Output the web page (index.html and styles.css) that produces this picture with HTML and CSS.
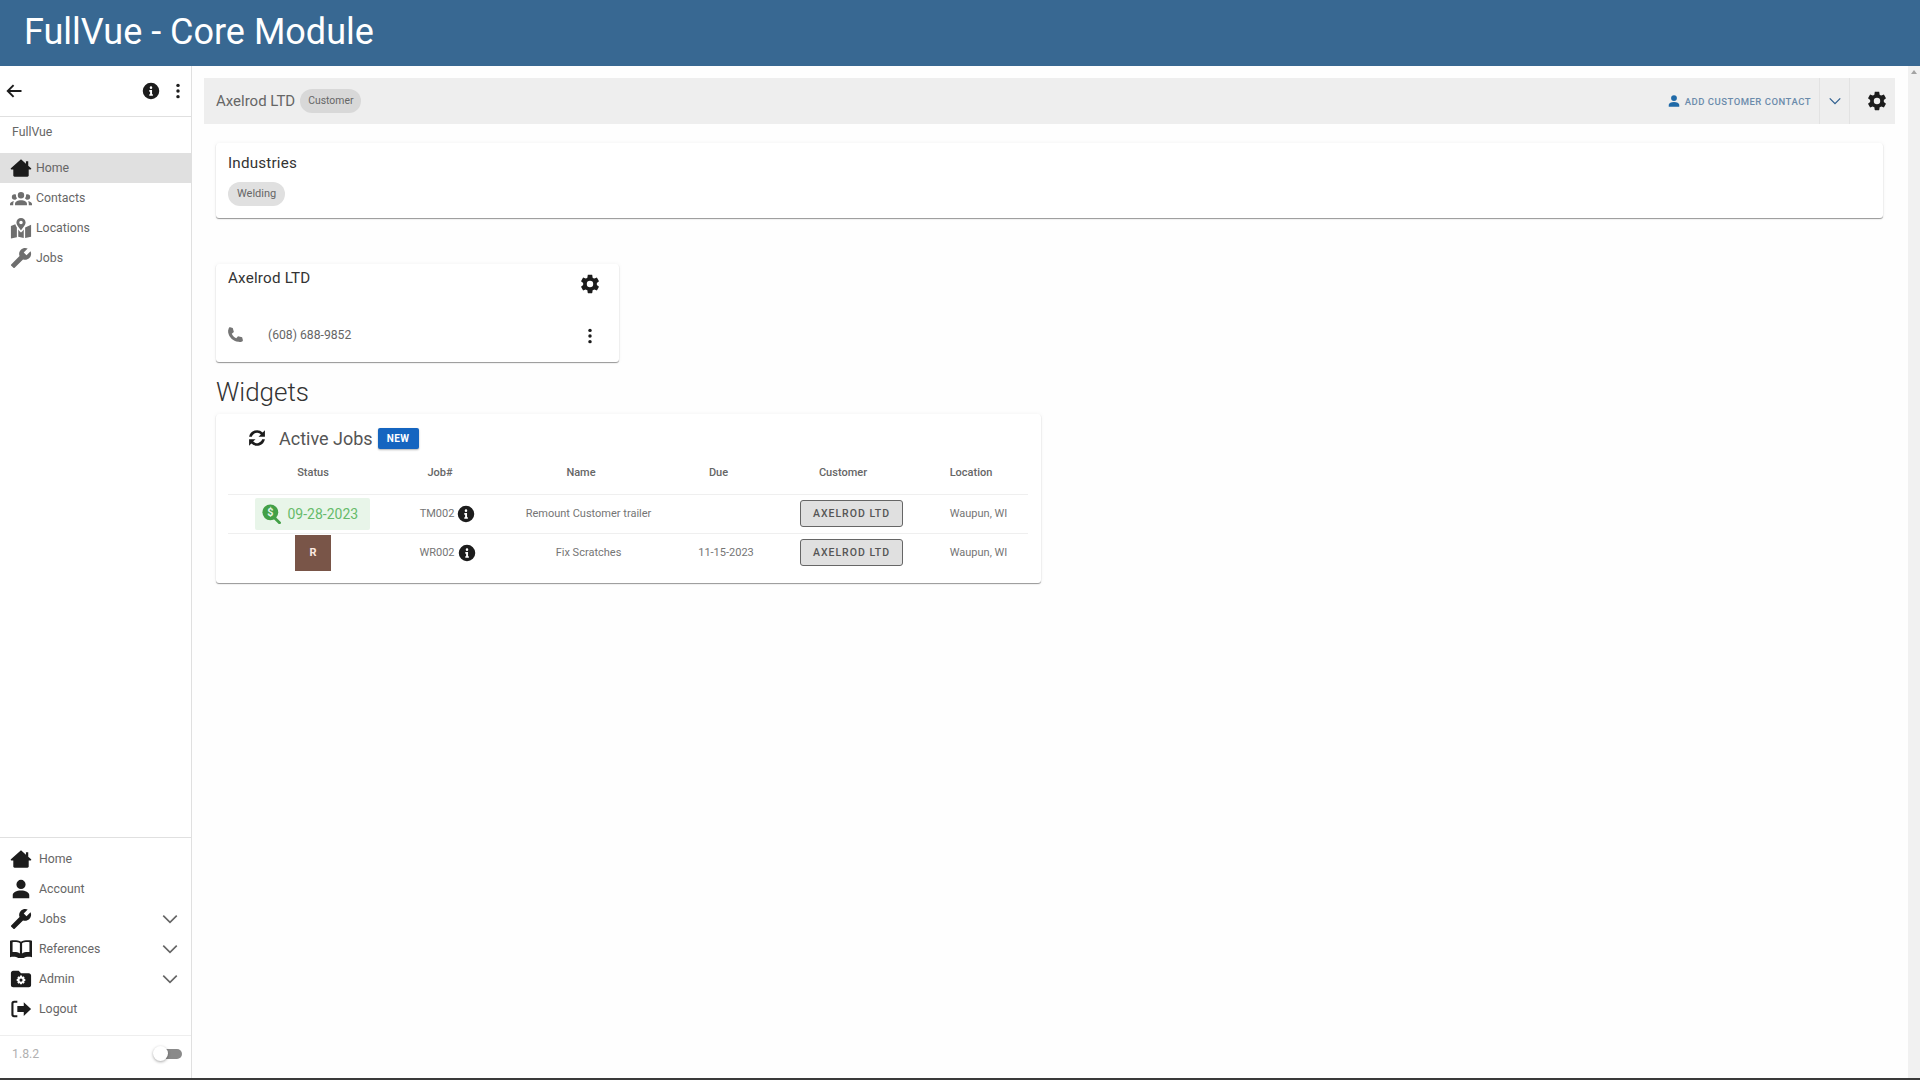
FILE: index.html
```html
<!DOCTYPE html>
<html lang="en">
<head>
    <meta charset="UTF-8">
    <title>FullVue - Core Module</title>
    <link rel="stylesheet" href="styles.css">
</head>
<body>
    <svg class="icon-defs" width="0" height="0">
        <symbol id="i-home" viewBox="0 0 24 24"><path d="M12 2.500 1 12.200c-.5.500-.2 1.300.5 1.300H3.600v6.700c0 .8.600 1.300 1.300 1.300h14.200c.7 0 1.300-.5 1.300-1.300v-6.700h2.100c.7 0 1-.8.5-1.300l-3.100-2.700V4.500h-2.500v2.900z"/></symbol>
        <symbol id="i-group" viewBox="0 0 24 24"><path d="M12,5.500A3.500,3.500 0 0,1 15.500,9A3.500,3.500 0 0,1 12,12.500A3.500,3.500 0 0,1 8.500,9A3.500,3.500 0 0,1 12,5.500M5,8C5.560,8 6.080,8.150 6.530,8.420C6.380,9.850 6.800,11.270 7.660,12.380C7.160,13.340 6.160,14 5,14A3,3 0 0,1 2,11A3,3 0 0,1 5,8M19,8A3,3 0 0,1 22,11A3,3 0 0,1 19,14C17.840,14 16.840,13.340 16.340,12.380C17.200,11.270 17.620,9.850 17.470,8.420C17.920,8.150 18.440,8 19,8M5.500,18.250C5.500,16.180 8.410,14.500 12,14.500C15.590,14.500 18.500,16.180 18.500,18.250V20H5.500V18.250M0,20V18.500C0,17.110 1.890,15.940 4.450,15.600C3.860,16.280 3.500,17.220 3.500,18.250V20H0M24,20H20.500V18.250C20.500,17.220 20.140,16.280 19.550,15.600C22.110,15.940 24,17.110 24,18.500V20Z"/></symbol>
        <symbol id="i-map" viewBox="0 0 24 24"><path fill-rule="evenodd" d="M12 1a5 5 0 0 0-5 5c0 2.500 3.300 6.500 5 8.500 1.700-2 5-6 5-8.500a5 5 0 0 0-5-5zm0 3.200a1.900 1.900 0 1 1 0 3.800 1.900 1.900 0 0 1 0-3.800z"/><path d="M1 9.800 5.800 8c.4 1.300 1 2.400 1.700 3.500V22L1 23.500zM9 13.500c.9 1.200 2 2.500 3 3.500 1-1 2.100-2.300 3-3.500V23l-6-1.500zM16.500 11.500l6.500-3v13L16.500 23z"/></symbol>
        <symbol id="i-wrench" viewBox="0 0 24 24"><path d="M1.300 19 10.400 9.900C9.500 7.600 10 4.900 11.900 3 13.900 1 16.900.6 19.300 1.700L15 6l3 3 4.400-4.300c1.200 2.400.7 5.400-1.300 7.400-1.900 1.900-4.600 2.400-6.900 1.500L5.100 22.700c-.4.400-1 .4-1.400 0L1.400 20.400c-.5-.4-.5-1.100-.1-1.400z"/></symbol>
        <symbol id="i-info" viewBox="0 0 24 24"><path fill-rule="evenodd" d="M12 1a11 11 0 1 0 0 22 11 11 0 0 0 0-22zm0 4.800a1.700 1.700 0 1 1 0 3.400 1.700 1.700 0 0 1 0-3.400zM9.700 10.800h3.700v5.500h1.100v2.100H9.700v-2.100h1.100v-3.400H9.700z"/></symbol>
        <symbol id="i-dots" viewBox="0 0 24 24"><circle cx="12" cy="4.500" r="2.300"/><circle cx="12" cy="12" r="2.300"/><circle cx="12" cy="19.500" r="2.300"/></symbol>
        <symbol id="i-cog" viewBox="0 0 24 24"><path fill-rule="evenodd" d="M12,15.500A3.500,3.500 0 0,1 8.500,12A3.500,3.500 0 0,1 12,8.500A3.500,3.500 0 0,1 15.500,12A3.500,3.500 0 0,1 12,15.500M19.430,12.970C19.470,12.650 19.500,12.330 19.500,12C19.500,11.670 19.470,11.340 19.430,11L21.540,9.370C21.730,9.220 21.780,8.950 21.660,8.730L19.660,5.270C19.540,5.050 19.270,4.960 19.050,5.050L16.560,6.050C16.040,5.660 15.500,5.320 14.870,5.070L14.500,2.420C14.460,2.180 14.250,2 14,2H10C9.750,2 9.540,2.180 9.500,2.420L9.130,5.070C8.500,5.320 7.960,5.660 7.440,6.050L4.950,5.050C4.730,4.960 4.460,5.050 4.340,5.270L2.340,8.730C2.210,8.950 2.270,9.220 2.460,9.370L4.570,11C4.530,11.340 4.500,11.670 4.500,12C4.500,12.330 4.530,12.650 4.570,12.970L2.460,14.630C2.270,14.780 2.210,15.050 2.340,15.270L4.340,18.730C4.460,18.950 4.730,19.030 4.950,18.950L7.440,17.940C7.960,18.340 8.500,18.680 9.130,18.930L9.500,21.580C9.540,21.820 9.750,22 10,22H14C14.250,22 14.460,21.820 14.500,21.580L14.870,18.930C15.500,18.670 16.040,18.340 16.560,17.940L19.050,18.950C19.270,19.030 19.540,18.950 19.660,18.730L21.660,15.270C21.780,15.050 21.730,14.780 21.540,14.630L19.430,12.970Z"/></symbol>
        <symbol id="i-phone" viewBox="0 0 24 24"><path d="M5.500 1.500 9 2.500l1.500 5.500-2.800 2.300c1.300 2.700 3.300 4.800 6 6l2.300-2.800 5.500 1.500 1 3.500c.2.800-.2 1.600-1 2-1.500.7-3.300.9-5 .6C9 19.800 4.200 15 2.900 8.500c-.3-1.700-.1-3.500.6-5 .4-.8 1.200-2.200 2-2z"/></symbol>
        <symbol id="i-user" viewBox="0 0 24 24"><path d="M12,2A5,5 0 0,1 17,7A5,5 0 0,1 12,12A5,5 0 0,1 7,7A5,5 0 0,1 12,2M12,13.500C16.900,13.500 21,15.600 21,18.500V22H3V18.500C3,15.600 7.100,13.500 12,13.500Z"/></symbol>
        <symbol id="i-sync" viewBox="0 0 24 24"><path d="M2.500 10.500A9.700 9.700 0 0 1 18.800 5.400L21.500 2.800V10.500H13.800L16.600 7.700A6.500 6.500 0 0 0 5.800 10.500zM21.500 13.500A9.700 9.700 0 0 1 5.200 18.600L2.500 21.200V13.500H10.200L7.400 16.300A6.500 6.500 0 0 0 18.200 13.500z"/></symbol>
        <symbol id="i-book" viewBox="0 0 24 24"><path fill-rule="evenodd" d="M0 3C4 2 9 2.500 12 4 15 2.500 20 2 24 3V21c-3.500-.8-7-.5-9 .9H9C7 20.500 3.500 20.200 0 21zM2.800 4.600V15.300c3-.4 6 .1 8 1.500V5.600C8.800 4.500 5.500 4.200 2.800 4.600zM21.200 4.600C18.500 4.200 15.200 4.500 13.200 5.600V16.800c2-1.400 5-1.900 8-1.500z"/></symbol>
        <symbol id="i-admin" viewBox="0 0 24 24"><path fill-rule="evenodd" d="M3.500 3h6l2.500 2.800h8.500c1.400 0 2.500 1.100 2.500 2.500v10.200c0 1.400-1.100 2.500-2.500 2.500h-17C2.100 21 1 19.900 1 18.500v-13C1 4.100 2.100 3 3.500 3zM12 11.500a1.700 1.700 0 1 1 0 3.400 1.700 1.700 0 0 1 0-3.400zm-1-3.200h2l.3 1.400 1.300-.6 1.400 1.400-.7 1.300 1.400.3v2l-1.400.3.700 1.300-1.400 1.400-1.300-.7-.3 1.400h-2l-.3-1.400-1.300.7-1.400-1.400.7-1.300-1.400-.3v-2l1.400-.3-.7-1.300 1.400-1.400 1.300.6z"/></symbol>
        <symbol id="i-logout" viewBox="0 0 24 24"><path d="M8 3H4.500A3 3 0 0 0 1.500 6v12a3 3 0 0 0 3 3H8v-2.200H4.800a1 1 0 0 1-1-1V6.200a1 1 0 0 1 1-1H8z"/><path d="M15 4.500 23 12l-8 7.500v-4.300H8V8.800h7z"/></symbol>
        <symbol id="i-chevron" viewBox="0 0 24 24"><path d="M3 7.500 12 16.500 21 7.500" fill="none" stroke="currentColor" stroke-width="2.200"/></symbol>
    </svg>

    <header class="app-bar">FullVue - Core Module</header>

    <div class="app-body">
        <nav class="sidebar">
            <div class="sidebar-top">
                <svg class="back-arrow" viewBox="0 0 24 24"><path d="M21 12H5M11.500 5 4.500 12l7 7" fill="none" stroke="currentColor" stroke-width="2.300"/></svg>
                <span class="spacer"></span>
                <svg class="ico-18"><use href="#i-info"/></svg>
                <svg class="ico-18 dots"><use href="#i-dots"/></svg>
            </div>
            <div class="sidebar-label">FullVue</div>
            <a class="nav-item active"><svg class="nav-icon dark"><use href="#i-home"/></svg>Home</a>
            <a class="nav-item"><svg class="nav-icon"><use href="#i-group"/></svg>Contacts</a>
            <a class="nav-item"><svg class="nav-icon"><use href="#i-map"/></svg>Locations</a>
            <a class="nav-item"><svg class="nav-icon"><use href="#i-wrench"/></svg>Jobs</a>

            <div class="sidebar-bottom">
                <a class="nav-item lower"><svg class="nav-icon dark"><use href="#i-home"/></svg>Home</a>
                <a class="nav-item lower"><svg class="nav-icon dark"><use href="#i-user"/></svg>Account</a>
                <a class="nav-item lower"><svg class="nav-icon dark"><use href="#i-wrench"/></svg>Jobs<svg class="nav-chevron"><use href="#i-chevron"/></svg></a>
                <a class="nav-item lower"><svg class="nav-icon dark"><use href="#i-book"/></svg>References<svg class="nav-chevron"><use href="#i-chevron"/></svg></a>
                <a class="nav-item lower"><svg class="nav-icon dark"><use href="#i-admin"/></svg>Admin<svg class="nav-chevron"><use href="#i-chevron"/></svg></a>
                <a class="nav-item lower"><svg class="nav-icon dark"><use href="#i-logout"/></svg>Logout</a>
            </div>
            <div class="sidebar-foot">
                <span class="version">1.8.2</span>
                <span class="toggle"><span class="toggle-thumb"></span></span>
            </div>
        </nav>

        <main class="main">
            <div class="toolbar">
                <span class="toolbar-title">Axelrod LTD</span>
                <span class="chip toolbar-chip">Customer</span>
                <span class="spacer"></span>
                <a class="add-contact"><svg class="ico-14"><use href="#i-user"/></svg>ADD CUSTOMER CONTACT</a>
                <span class="toolbar-cell chevron-cell"><svg class="ico-14"><use href="#i-chevron"/></svg></span>
                <span class="toolbar-cell gear-cell"><svg class="ico-22"><use href="#i-cog"/></svg></span>
            </div>

            <div class="content">
                <section class="card industries">
                    <h3 class="card-title">Industries</h3>
                    <span class="chip">Welding</span>
                </section>

                <section class="card contact">
                    <div class="contact-head">
                        <h3 class="card-title">Axelrod LTD</h3>
                        <svg class="ico-22"><use href="#i-cog"/></svg>
                    </div>
                    <div class="contact-row">
                        <svg class="phone-icon"><use href="#i-phone"/></svg>
                        <span class="phone-number">(608) 688-9852</span>
                        <svg class="ico-18 dots"><use href="#i-dots"/></svg>
                    </div>
                </section>

                <h2 class="section-title">Widgets</h2>

                <section class="card widget">
                    <div class="widget-head">
                        <svg class="sync-icon"><use href="#i-sync"/></svg>
                        <span class="widget-title">Active Jobs</span>
                        <span class="badge">NEW</span>
                    </div>
                    <table class="jobs">
                        <thead>
                            <tr>
                                <th class="col-status">Status</th>
                                <th class="col-job"><span class="sortable">Job#</span></th>
                                <th class="col-name"><span class="sortable">Name</span></th>
                                <th class="col-due"><span class="sortable">Due</span></th>
                                <th class="col-customer"><span class="sortable">Customer</span></th>
                                <th class="col-location"><span class="sortable">Location</span></th>
                            </tr>
                        </thead>
                        <tbody>
                            <tr>
                                <td>
                                    <span class="status-chip">
                                        <svg class="search-dollar" viewBox="0 0 24 24">
                                            <path d="M14 15.500 21 22.500" stroke="#43a047" stroke-width="3.400" stroke-linecap="round"/>
                                            <circle cx="10" cy="10" r="9.500" fill="#43a047"/>
                                            <text x="10" y="14.800" text-anchor="middle" class="dollar">$</text>
                                        </svg>
                                        09-28-2023
                                    </span>
                                </td>
                                <td><span class="job-cell">TM002<svg class="ico-18"><use href="#i-info"/></svg></span></td>
                                <td>Remount Customer trailer</td>
                                <td></td>
                                <td><a class="customer-btn">AXELROD LTD</a></td>
                                <td>Waupun, WI</td>
                            </tr>
                            <tr>
                                <td><span class="status-tile">R</span></td>
                                <td><span class="job-cell">WR002<svg class="ico-18"><use href="#i-info"/></svg></span></td>
                                <td>Fix Scratches</td>
                                <td>11-15-2023</td>
                                <td><a class="customer-btn">AXELROD LTD</a></td>
                                <td>Waupun, WI</td>
                            </tr>
                        </tbody>
                    </table>
                </section>
            </div>
        </main>

        <div class="scrollbar"><span class="scroll-arrow"></span></div>
    </div>
    <div class="bottom-edge"></div>
</body>
</html>
```

FILE: styles.css
```css
* {
    box-sizing: border-box;
}
html, body {
    height: 100%;
}
body {
    margin: 0;
    overflow: hidden;
    display: flex;
    flex-direction: column;
    font-family: Roboto, "Liberation Sans", sans-serif;
    color: #666;
    background-color: #fefefe;
}
.icon-defs {
    position: absolute;
}
svg {
    fill: currentColor;
    flex: none;
}
.ico-14 {
    width: 14px;
    height: 14px;
}
.ico-18 {
    width: 18px;
    height: 18px;
    color: #1c1c1c;
}
.ico-22 {
    width: 22px;
    height: 22px;
    color: #1c1c1c;
}
.spacer {
    flex: 1;
}

.app-bar {
    height: 66px;
    flex: none;
    padding-left: 24px;
    background-color: #386892;
    color: #fff;
    font-size: 36px;
    line-height: 65px;
}
.app-body {
    flex: 1;
    min-height: 0;
    display: flex;
}
.bottom-edge {
    height: 2px;
    flex: none;
    background-color: #3a3a3a;
}

/* left nav */
.sidebar {
    width: 192px;
    flex: none;
    display: flex;
    flex-direction: column;
    border-right: 1px solid #e0e0e0;
    background-color: #fff;
}
.sidebar-top {
    height: 51px;
    flex: none;
    display: flex;
    align-items: center;
    gap: 9px;
    padding: 0 4px 0 4px;
    border-bottom: 1px solid #e0e0e0;
    color: #1c1c1c;
}
.back-arrow {
    width: 20px;
    height: 20px;
}
.sidebar-label {
    height: 36px;
    flex: none;
    padding-left: 12px;
    font-size: 12.300px;
    line-height: 30px;
}
.nav-item {
    height: 30px;
    flex: none;
    display: flex;
    align-items: center;
    padding-left: 10px;
    padding-bottom: 1px;
    font-size: 12.300px;
}
.nav-item.active {
    background-color: #e0e0e0;
}
.nav-icon {
    width: 22px;
    height: 22px;
    margin-right: 4px;
    color: #6e6e6e;
}
.nav-icon.dark {
    color: #1c1c1c;
}
.lower .nav-icon {
    margin-right: 7px;
}
.nav-chevron {
    width: 18px;
    height: 18px;
    margin-left: auto;
    margin-right: 12px;
    color: #666;
}
.sidebar-bottom {
    margin-top: auto;
    padding: 6px 0 11px;
    border-top: 1px solid #e0e0e0;
    border-bottom: 1px solid #eee;
}
.sidebar-foot {
    height: 42px;
    flex: none;
    display: flex;
    align-items: center;
    justify-content: space-between;
    padding: 0 9px 6px 12px;
}
.version {
    font-size: 12.300px;
    color: #b0b0b0;
}
.toggle {
    position: relative;
    width: 24px;
    height: 10px;
    border-radius: 5px;
    background-color: #8a8a8a;
}
.toggle-thumb {
    position: absolute;
    left: -5px;
    top: -3px;
    width: 15px;
    height: 15px;
    border-radius: 50%;
    background-color: #fff;
    box-shadow: 0 1px 3px rgba(0, 0, 0, 0.35);
}

/* main area */
.main {
    flex: 1;
    min-width: 0;
    padding: 12px 13px 0 12px;
}
.toolbar {
    height: 46px;
    display: flex;
    align-items: center;
    padding-left: 12px;
    background-color: #eee;
    color: #666;
}
.toolbar-title {
    font-size: 15px;
}
.chip {
    display: inline-block;
    height: 24px;
    padding: 0 9px;
    border-radius: 12px;
    background-color: #e0e0e0;
    font-size: 11px;
    line-height: 24px;
    color: #666;
}
.toolbar-chip {
    margin-left: 5px;
    padding: 0 8px;
    font-size: 10.400px;
    background-color: #d8d8d8;
}
.add-contact {
    display: flex;
    align-items: center;
    gap: 4px;
    margin-right: 8px;
    color: #6b8bab;
    font-size: 9.500px;
    font-weight: 500;
    letter-spacing: 0.5px;
}
.add-contact svg {
    color: #1f6aa8;
}
.toolbar-cell {
    height: 46px;
    display: flex;
    align-items: center;
    justify-content: center;
    border-left: 1px solid #e2e2e2;
}
.chevron-cell {
    width: 30px;
    color: #2f5f8f;
}
.gear-cell {
    width: 46px;
    padding-left: 9px;
}

.content {
    padding: 19px 12px 0;
}
.card {
    background-color: #fff;
    border-radius: 3px;
    box-shadow: 0 1px 1px rgba(0, 0, 0, 0.4), 0 0 4px rgba(0, 0, 0, 0.05);
}
.card-title {
    margin: 0;
    font-size: 15.200px;
    font-weight: 400;
    letter-spacing: 0.2px;
    color: #333;
}
.industries {
    height: 75px;
    padding: 12px;
}
.industries .card-title {
    margin-bottom: 10px;
    line-height: 17px;
}
.contact {
    width: 403px;
    height: 98px;
    margin-top: 46px;
    padding: 6px 12px 0;
}
.contact-head {
    display: flex;
    justify-content: space-between;
    padding-right: 10px;
    height: 46px;
}
.contact-head .card-title {
    line-height: 17px;
}
.contact-head .ico-22 {
    margin: 3px -4px 0 0;
}
.contact-row {
    display: flex;
    align-items: center;
    height: 38px;
    padding-right: 10px;
}
.phone-icon {
    width: 18px;
    height: 18px;
    margin-left: -2px;
    color: #757575;
}
.phone-number {
    flex: 1;
    margin-left: 24px;
    font-size: 12.200px;
}
.contact-row .dots {
    margin: 1px -2px 0 0;
}
.section-title {
    margin: 15px 0 7px;
    font-size: 26px;
    font-weight: 300;
    line-height: 30px;
    color: #333;
}
.widget {
    width: 825px;
    height: 169px;
    padding: 0 10px 0 12px;
}
.widget-head {
    height: 46px;
    display: flex;
    align-items: center;
    padding: 2px 0 0 19px;
}
.sync-icon {
    width: 20px;
    height: 20px;
    color: #1c1c1c;
}
.widget-title {
    margin-left: 12px;
    font-size: 18px;
    color: #555;
}
.badge {
    margin-left: 5px;
    width: 41px;
    height: 21px;
    border-radius: 2px;
    background-color: #1565c0;
    color: #fff;
    font-size: 10px;
    font-weight: 700;
    line-height: 21px;
    text-align: center;
    letter-spacing: 0.4px;
    box-shadow: 0 1px 2px rgba(0, 0, 0, 0.3);
}

/* jobs table */
.jobs {
    width: 800px;
    table-layout: fixed;
    border-collapse: collapse;
    font-size: 11px;
    text-align: center;
}
.jobs th {
    height: 34px;
    padding: 0 0 9px;
    font-weight: 500;
    color: #666;
    border-bottom: 1px solid #efefef;
}
.jobs td {
    height: 39px;
    padding: 0;
    color: #757575;
}
.jobs tbody tr:first-child td {
    border-bottom: 1px solid #efefef;
}
.sortable {
    padding-right: 15px;
}
.col-status { width: 170px; }
.col-job { width: 99px; }
.col-name { width: 183px; }
.col-due { width: 92px; }
.col-customer { width: 157px; }
.status-chip {
    display: inline-flex;
    align-items: center;
    gap: 6px;
    width: 115px;
    height: 32px;
    margin-right: 2px;
    padding-left: 7px;
    border-radius: 2px;
    background-color: #e8f5e9;
    color: #66bb6a;
    font-size: 14px;
    vertical-align: middle;
}
.search-dollar {
    width: 20px;
    height: 20px;
}
.dollar {
    font-size: 13px;
    font-weight: 700;
    fill: #e8f5e9;
}
.status-tile {
    display: inline-block;
    width: 36px;
    height: 36px;
    background-color: #795548;
    color: #fbe9e0;
    font-size: 11px;
    font-weight: 700;
    line-height: 36px;
    vertical-align: middle;
}
.job-cell {
    display: inline-flex;
    align-items: center;
    gap: 3px;
    vertical-align: middle;
}
.customer-btn {
    display: inline-block;
    width: 103px;
    height: 27px;
    margin-left: 2px;
    border: 1px solid #666;
    border-radius: 3px;
    background-color: #e0e0e0;
    color: #555;
    font-size: 10.500px;
    font-weight: 500;
    line-height: 25px;
    letter-spacing: 1px;
    vertical-align: middle;
}

.scrollbar {
    width: 12px;
    flex: none;
    display: flex;
    justify-content: center;
    padding-top: 4px;
    background-color: #f1f1f1;
}
.scroll-arrow {
    width: 0;
    height: 0;
    border-left: 3px solid transparent;
    border-right: 3px solid transparent;
    border-bottom: 4px solid #a3a3a3;
}
```
